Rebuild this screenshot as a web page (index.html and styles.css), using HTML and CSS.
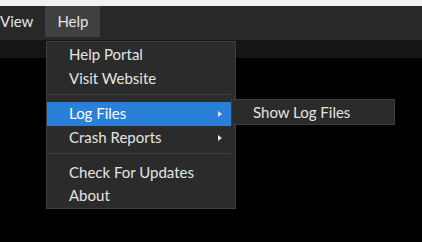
FILE: index.html
```html
<!DOCTYPE html>
<html lang="en">
<head>
  <meta charset="UTF-8" />
  <title>Help menu</title>
  <link rel="stylesheet" href="styles.css">
</head>
<body>
  <div class="top-strip"></div>
  <div class="menubar">
    <div class="menubar-item first">View</div>
    <div class="menubar-item open">Help</div>
  </div>
  <div class="toolbar"></div>

  <!-- Help dropdown -->
  <div class="menu">
    <div class="menu-item">Help Portal</div>
    <div class="menu-item">Visit Website</div>
    <div class="menu-sep"></div>
    <div class="menu-item active has-sub">Log Files</div>
    <div class="menu-item has-sub">Crash Reports</div>
    <div class="menu-sep"></div>
    <div class="menu-item">Check For Updates</div>
    <div class="menu-item last">About</div>
  </div>

  <!-- Log Files submenu -->
  <div class="menu submenu">
    <div class="menu-item">Show Log Files</div>
  </div>
</body>
</html>
```

FILE: styles.css
```css
:root {
  --bar: #282828;
  --menu-bg: #2b2b2b;
  --menu-border: #3d3d3d;
  --text: #e4e4e4;
  --accent: #2a80d8;
}

html, body {
  margin: 0;
  padding: 0;
  height: 100%;
  background: #000;
  font-family: Lato, "Noto Sans", sans-serif;
  font-size: 15px;
  color: var(--text);
  overflow: hidden;
}

.top-strip {
  height: 6px;
  background: #f0f1f5;
}

.menubar {
  height: 34px;
  background: var(--bar);
  display: flex;
  align-items: flex-start;
}

.menubar-item {
  height: 29px;
  padding: 0 12px 2px;
  display: flex;
  align-items: center;
}

.menubar-item.first {
  margin-left: -12px;
}

.menubar-item.open {
  background: #404040;
  width: 31px;
}

.toolbar {
  height: 18px;
  background: #151515;
}

.menu {
  position: absolute;
  left: 46px;
  top: 41px;
  width: 188px;
  padding: 1px 0;
  background: var(--menu-bg);
  border: 1px solid var(--menu-border);
}

.menu-item {
  position: relative;
  height: 24px;
  line-height: 22px;
  padding-left: 22px;
  margin-right: 4px;
  white-space: nowrap;
}

.menu-item.last {
  height: 22px;
  line-height: 20px;
}

.menu-item.active {
  background: var(--accent);
  color: #fff;
}

.has-sub::after {
  content: "";
  position: absolute;
  right: 9px;
  top: 9px;
  border-left: 4px solid #e4e4e4;
  border-top: 3px solid transparent;
  border-bottom: 3px solid transparent;
}

.menu-sep {
  height: 1px;
  background: var(--menu-border);
  margin: 3px 4px 7px 0;
}

.submenu {
  left: 231px;
  top: 99px;
  width: 162px;
  padding: 0;
}

.submenu .menu-item {
  padding-left: 21px;
  line-height: 24px;
}
```
